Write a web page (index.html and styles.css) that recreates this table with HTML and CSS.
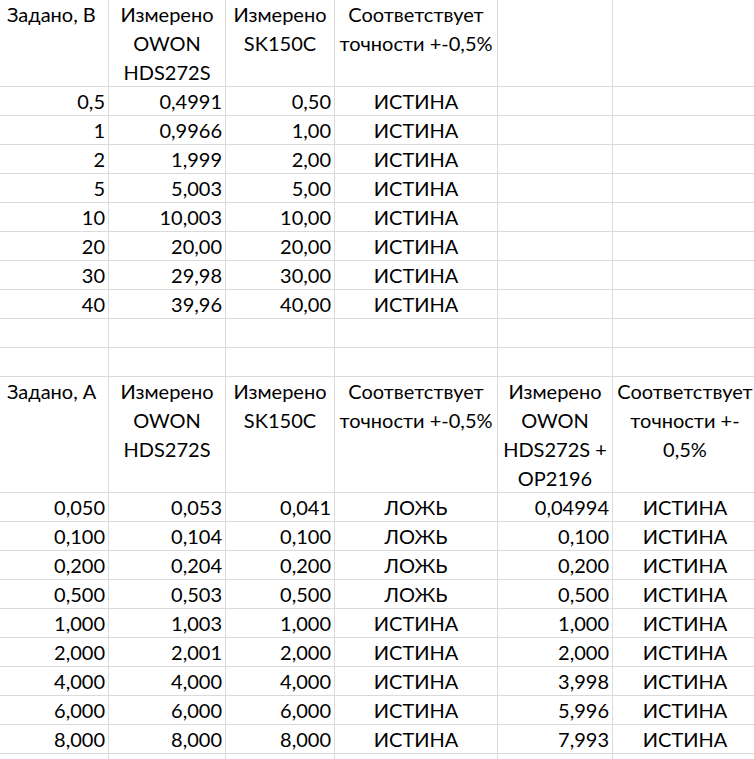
FILE: index.html
```html
<!DOCTYPE html>
<html lang="ru">
<head>
<meta charset="utf-8">
<title>Таблица</title>
<link rel="stylesheet" href="styles.css">
</head>
<body>
<div class="sheet">
  <div class="c l">Задано, В</div>
  <div class="c m">Измерено<br>OWON<br>HDS272S</div>
  <div class="c m">Измерено<br>SK150C</div>
  <div class="c m">Соответствует<br>точности +-0,5%</div>
  <div class="c"></div>
  <div class="c"></div>

  <div class="c r">0,5</div><div class="c r">0,4991</div><div class="c r">0,50</div><div class="c m">ИСТИНА</div><div class="c"></div><div class="c"></div>
  <div class="c r">1</div><div class="c r">0,9966</div><div class="c r">1,00</div><div class="c m">ИСТИНА</div><div class="c"></div><div class="c"></div>
  <div class="c r">2</div><div class="c r">1,999</div><div class="c r">2,00</div><div class="c m">ИСТИНА</div><div class="c"></div><div class="c"></div>
  <div class="c r">5</div><div class="c r">5,003</div><div class="c r">5,00</div><div class="c m">ИСТИНА</div><div class="c"></div><div class="c"></div>
  <div class="c r">10</div><div class="c r">10,003</div><div class="c r">10,00</div><div class="c m">ИСТИНА</div><div class="c"></div><div class="c"></div>
  <div class="c r">20</div><div class="c r">20,00</div><div class="c r">20,00</div><div class="c m">ИСТИНА</div><div class="c"></div><div class="c"></div>
  <div class="c r">30</div><div class="c r">29,98</div><div class="c r">30,00</div><div class="c m">ИСТИНА</div><div class="c"></div><div class="c"></div>
  <div class="c r">40</div><div class="c r">39,96</div><div class="c r">40,00</div><div class="c m">ИСТИНА</div><div class="c"></div><div class="c"></div>

  <div class="c"></div><div class="c"></div><div class="c"></div><div class="c"></div><div class="c"></div><div class="c"></div>
  <div class="c"></div><div class="c"></div><div class="c"></div><div class="c"></div><div class="c"></div><div class="c"></div>

  <div class="c l">Задано, А</div>
  <div class="c m">Измерено<br>OWON<br>HDS272S</div>
  <div class="c m">Измерено<br>SK150C</div>
  <div class="c m">Соответствует<br>точности +-0,5%</div>
  <div class="c m">Измерено<br>OWON<br>HDS272S +<br>OP2196</div>
  <div class="c m">Соответствует<br>точности +-<br>0,5%</div>

  <div class="c r">0,050</div><div class="c r">0,053</div><div class="c r">0,041</div><div class="c m">ЛОЖЬ</div><div class="c r">0,04994</div><div class="c m">ИСТИНА</div>
  <div class="c r">0,100</div><div class="c r">0,104</div><div class="c r">0,100</div><div class="c m">ЛОЖЬ</div><div class="c r">0,100</div><div class="c m">ИСТИНА</div>
  <div class="c r">0,200</div><div class="c r">0,204</div><div class="c r">0,200</div><div class="c m">ЛОЖЬ</div><div class="c r">0,200</div><div class="c m">ИСТИНА</div>
  <div class="c r">0,500</div><div class="c r">0,503</div><div class="c r">0,500</div><div class="c m">ЛОЖЬ</div><div class="c r">0,500</div><div class="c m">ИСТИНА</div>
  <div class="c r">1,000</div><div class="c r">1,003</div><div class="c r">1,000</div><div class="c m">ИСТИНА</div><div class="c r">1,000</div><div class="c m">ИСТИНА</div>
  <div class="c r">2,000</div><div class="c r">2,001</div><div class="c r">2,000</div><div class="c m">ИСТИНА</div><div class="c r">2,000</div><div class="c m">ИСТИНА</div>
  <div class="c r">4,000</div><div class="c r">4,000</div><div class="c r">4,000</div><div class="c m">ИСТИНА</div><div class="c r">3,998</div><div class="c m">ИСТИНА</div>
  <div class="c r">6,000</div><div class="c r">6,000</div><div class="c r">6,000</div><div class="c m">ИСТИНА</div><div class="c r">5,996</div><div class="c m">ИСТИНА</div>
  <div class="c r">8,000</div><div class="c r">8,000</div><div class="c r">8,000</div><div class="c m">ИСТИНА</div><div class="c r">7,993</div><div class="c m">ИСТИНА</div>

  <div class="c"></div><div class="c"></div><div class="c"></div><div class="c"></div><div class="c"></div><div class="c"></div>
</div>
</body>
</html>
```

FILE: styles.css
```css
html, body {
  margin: 0;
  padding: 0;
  background: #ffffff;
  overflow: hidden;
}

.sheet {
  display: grid;
  grid-template-columns: 109px 117px 109px 163px 115px 145px;
  grid-template-rows: 87px repeat(10, 29px) 116px repeat(10, 29px);
  width: 758px;
  font-family: Lato, "Open Sans", sans-serif;
  font-size: 20px;
  line-height: 29px;
  color: #000000;
}

.c {
  box-sizing: border-box;
  border-right: 1px solid #dadada;
  border-bottom: 1px solid #dadada;
  white-space: nowrap;
  overflow: visible;
}

.r {
  text-align: right;
  padding-right: 3px;
}

.m {
  text-align: center;
}

.l {
  text-align: left;
  padding-left: 7px;
}
```
